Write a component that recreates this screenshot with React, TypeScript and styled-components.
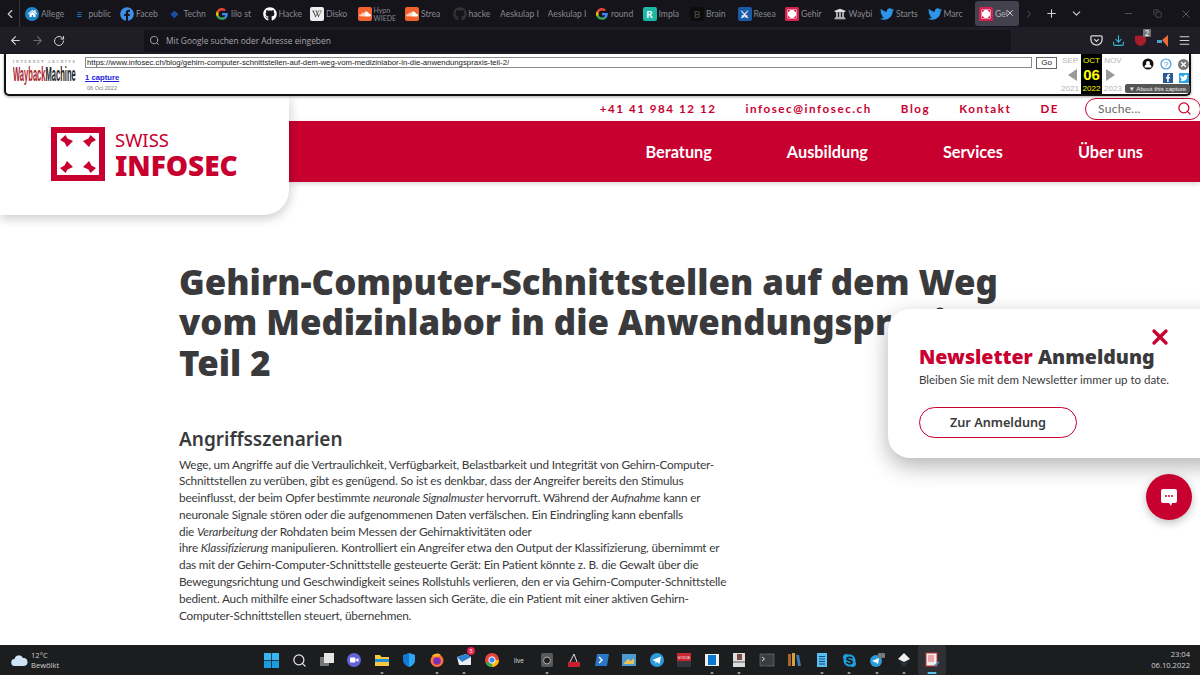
import React from "react";
import styled, { createGlobalStyle } from "styled-components";
import { FaFacebook, FaGithub, FaSoundcloud, FaTwitter, FaSkype, FaFacebookF, FaWikipediaW, FaUniversity, FaHome } from "react-icons/fa";
import { ArrowLeft, ArrowRight, RotateCw, Search, ChevronLeft, ChevronRight, ChevronDown, Plus, Minus, X, Menu, Download, Copy } from "lucide-react";

const RED = "#c8002f";
const INK = "#3a3a3c";
const SANS = `Lato, "Noto Sans", sans-serif`;

const Global = createGlobalStyle`
  html, body { margin: 0; padding: 0; background: #fff; }
  body { width: 1200px; height: 675px; overflow: hidden; font-family: ${SANS}; }
  * { box-sizing: border-box; }
`;

const Screen = styled.div`
  width: 1200px; height: 675px; display: flex; flex-direction: column; overflow: hidden;
`;

/* ---------- browser tabs ---------- */
const TabBar = styled.div`
  height: 27px; flex: none; background: #14141a; display: flex; align-items: center; color: #c9c9cf;
`;
const BackTab = styled.div`
  width: 20px; height: 27px; flex: none; display: flex; align-items: center; justify-content: center; border-right: 1px solid #33333a;
`;
const TabList = styled.div`
  display: flex; margin-left: 5px; width: 995px; flex: none;
`;
const Tab = styled.div<{ $active?: boolean }>`
  width: 47.5px; height: 25px; flex: none; display: flex; align-items: center; gap: 2px; overflow: hidden;
  border-radius: 3px; position: relative;
  background: ${(p) => (p.$active ? "#42414d" : "transparent")};
  font-size: 8.6px; color: ${(p) => (p.$active ? "#bbb" : "#93939a")}; white-space: nowrap;
`;
const TabActive = styled(Tab)`
  margin-left: 0; padding-left: 4px; width: 44px; margin-right: 3.500px;
`;
const TabLabel = styled.span`
  display: block; flex: none; opacity: .92;
`;
const TabDoubleLabel = styled(TabLabel)`
  line-height: 8px; font-size: 7px; white-space: normal; width: 22px;
`;
const TabClose = styled.span`
  position: absolute; right: 4px; top: 7px; display: flex; color: #e6e6e6;
`;
const TabIcon = styled.span<{ $bg?: string; $c?: string }>`
  width: 14px; height: 14px; flex: none; display: flex; align-items: center; justify-content: center; border-radius: 2px;
  background: ${(p) => p.$bg || "transparent"}; color: ${(p) => p.$c || "#fff"}; font-size: 10px; font-weight: 700; line-height: 1;
`;
const TabTools = styled.div`
  flex: 1; display: flex; align-items: center; height: 27px; color: #d5d5d8;
`;
const ToolSlot = styled.span<{ $w: number; $dim?: boolean }>`
  width: ${(p) => p.$w}px; flex: none; display: flex; justify-content: center; opacity: ${(p) => (p.$dim ? 0.35 : 1)};
`;

/* ---------- url toolbar ---------- */
const UrlToolbar = styled.div`
  height: 27px; flex: none; background: #1f1e26; display: flex; align-items: center; color: #d5d5d8;
`;
const NavButtons = styled.div`
  width: 144px; flex: none; display: flex; padding-left: 7px; gap: 6px; align-items: center;
`;
const NavBtn = styled.span<{ $dim?: boolean }>`
  width: 16px; display: flex; justify-content: center; opacity: ${(p) => (p.$dim ? 0.4 : 1)};
`;
const UrlField = styled.div`
  width: 867px; height: 22px; flex: none; background: #15141a; border-radius: 3px; display: flex; align-items: center; gap: 6px;
  padding-left: 5px; font-family: "Open Sans", sans-serif; font-size: 8.4px; color: #a8a8ae;
`;
const ToolIcons = styled.div`
  flex: 1; display: flex; align-items: center; padding-left: 77px; gap: 6px;
`;
const ToolIcon = styled.span<{ $c?: string }>`
  position: relative; width: 16px; height: 16px; display: flex; align-items: center; justify-content: center; color: ${(p) => p.$c || "#d5d5d8"};
`;
const CountBadge = styled.span`
  position: absolute; top: -4px; right: -3px; background: #777; color: #fff; font-size: 7px; line-height: 8px; padding: 0 2px; border-radius: 1px;
`;

/* ---------- wayback ---------- */
const Wayback = styled.div`
  height: 42px; flex: none; margin: 0 9px 0 4px; background: #fff; border: 2px solid #111; border-top: 0;
  border-radius: 0 0 5px 5px; box-shadow: 0 1px 3px rgba(0,0,0,.35); display: flex; font-family: "Liberation Sans", Arial, sans-serif;
  position: relative; z-index: 5;
`;
const WbLogo = styled.div`
  width: 79px; flex: none; padding: 5px 0 0 7px; overflow: hidden;
`;
const WbTiny = styled.div`
  font-size: 3.6px; letter-spacing: 1.85px; color: #555; white-space: nowrap; line-height: 6px; font-family: "Liberation Serif", serif;
`;
const WbMark = styled.div`
  font-size: 21px; font-weight: 700; line-height: 17px; white-space: nowrap; transform: scaleX(.36); transform-origin: left center; width: 180px;
  color: #222;
`;
const WbRed = styled.span`
  color: #a8242e;
`;
const WbMain = styled.div`
  width: 947px; flex: none; display: flex; flex-direction: column; padding-top: 3px;
`;
const WbUrl = styled.div`
  height: 11px; width: 947px; border: 1px solid #8a8a8a; font-size: 7.77px; line-height: 9px; padding-left: 1px; color: #222; white-space: nowrap; overflow: hidden;
`;
const WbCapture = styled.a`
  font-size: 7.7px; font-weight: 700; color: #2222dd; text-decoration: underline; margin-top: 5px; line-height: 10px;
`;
const WbDate = styled.div`
  font-size: 5.5px; color: #777; margin: 2px 0 0 2px; line-height: 6px;
`;
const WbGo = styled.div`
  margin: 3px 0 0 4px; width: 21px; height: 12px; border: 1px solid #666; font-size: 8px; line-height: 10px; text-align: center; color: #222; flex: none;
`;
const WbCal = styled.div`
  display: flex; margin-left: 2px; flex: none; height: 40px;
`;
const WbCol = styled.div<{ $on?: boolean }>`
  width: ${(p) => (p.$on ? 21 : 22)}px; height: 40px; display: flex; flex-direction: column; align-items: center; justify-content: space-between;
  background: ${(p) => (p.$on ? "#000" : "#fff")}; color: ${(p) => (p.$on ? "#ff0" : "#b4b4b4")}; font-size: 8px; padding: 2px 0 1px; line-height: 9px;
`;
const WbDay = styled.div`
  font-size: 15px; font-weight: 700; line-height: 15px;
`;
const WbArrow = styled.div<{ $dir: "l" | "r" }>`
  width: 0; height: 0; border-style: solid; border-width: 6px 0 6px 0; border-color: transparent;
  ${(p) => (p.$dir === "l" ? "border-right: 9px solid #999; margin-left: 5px;" : "border-left: 9px solid #999; margin-right: 5px;")}
`;
const WbRight = styled.div`
  flex: 1; position: relative; padding: 3px 0 0 0; display: flex; flex-direction: column; align-items: flex-end;
`;
const WbIconRow = styled.div`
  display: flex; align-items: center; gap: 6px; height: 14px;
`;
const WbSquare = styled.span<{ $bg: string }>`
  width: 10px; height: 10px; background: ${(p) => p.$bg}; color: #fff; display: flex; align-items: center; justify-content: center;
`;
const WbAbout = styled.div`
  position: absolute; right: -1px; bottom: 1px; height: 9px; width: 65px; background: #555; color: #eee; font-size: 6.2px; line-height: 9px; border-radius: 2px;
  white-space: nowrap; text-align: center;
`;

/* ---------- page ---------- */
const Page = styled.main`
  flex: 1; min-height: 0; position: relative; overflow: hidden; background: #fff; font-family: ${SANS}; color: ${INK};
`;
const SiteHeader = styled.header`
  display: flex; height: 119px;
`;
const LogoCard = styled.div`
  width: 289px; height: 119px; flex: none; background: #fff; border-radius: 0 0 25px 0; box-shadow: 0 3px 12px rgba(0,0,0,.22);
  display: flex; align-items: flex-start; gap: 10px; padding: 31px 0 0 51px; position: relative; z-index: 2;
`;
const LogoText = styled.div`
  color: ${RED}; display: flex; flex-direction: column; font-family: "Noto Sans", sans-serif;
`;
const LogoSwiss = styled.div`
  font-size: 18.5px; line-height: 20px; margin-top: 3px;
`;
const LogoInfosec = styled.div`
  font-size: 28px; font-weight: 900; line-height: 33px; margin-top: -1px;
`;
const HeaderRight = styled.div`
  flex: 1; min-width: 0; display: flex; flex-direction: column;
`;
const TopLinks = styled.div`
  height: 25px; flex: none; display: flex; align-items: center; justify-content: flex-end; gap: 29px; color: ${RED};
  font-size: 11.6px; font-weight: 700; letter-spacing: 1.55px; white-space: nowrap;
`;
const SearchPill = styled.div`
  width: 116px; height: 22px; margin-left: -3px; margin-right: -1px; border: 1.5px solid ${RED}; border-radius: 11px; display: flex; align-items: center; justify-content: space-between;
  padding: 0 8px 0 12px; color: #666; font-size: 12px; font-weight: 400; letter-spacing: .3px;
`;
const RedBar = styled.nav`
  height: 61px; flex: none; background: ${RED}; display: flex; align-items: center; justify-content: flex-end; gap: 75px; padding-right: 57px;
  color: #fff; font-size: 16.3px; font-weight: 700; box-shadow: 0 2px 5px rgba(0,0,0,.15);
`;
const Article = styled.article`
  padding: 46.5px 0 0 179px;
`;
const Title = styled.h1`
  margin: 0; font-family: "Noto Sans", sans-serif; font-size: 34.8px; line-height: 40.5px; font-weight: 900; color: ${INK}; white-space: nowrap;
`;
const SubTitle = styled.h2`
  margin: 42.5px 0 5px; font-family: "Noto Sans", sans-serif; font-size: 19px; line-height: 26px; font-weight: 600; color: ${INK};
`;
const Body = styled.p`
  margin: 0; font-size: 11.8px; letter-spacing: -.19px; line-height: 16.8px; color: ${INK}; white-space: nowrap;
`;
const Popup = styled.aside`
  position: absolute; left: 888px; top: 213px; width: 340px; height: 149px; background: #fff; border-radius: 22px; box-shadow: 0 8px 22px rgba(0,0,0,.3);
  padding: 34px 0 0 31px; z-index: 3;
`;
const PopupClose = styled.span`
  position: absolute; left: 260px; top: 16px; color: ${RED}; display: flex;
`;
const PopupTitle = styled.div`
  font-family: "Noto Sans", sans-serif; font-size: 19.6px; line-height: 28px; font-weight: 900; color: ${INK}; white-space: nowrap;
`;
const PopupRed = styled.span`
  color: ${RED};
`;
const PopupText = styled.div`
  font-size: 11.5px; line-height: 16px; margin-top: 1px; white-space: nowrap;
`;
const PopupButton = styled.div`
  width: 158px; height: 31px; margin-top: 19px; border: 1.5px solid ${RED}; border-radius: 16px; text-align: center; font-family: "Noto Sans", sans-serif; font-size: 12.7px; line-height: 28px; font-weight: 600; color: ${INK};
`;
const ChatButton = styled.div`
  position: absolute; left: 1146px; top: 378px; width: 46px; height: 46px; border-radius: 50%; background: ${RED}; display: flex; align-items: center; justify-content: center;
  box-shadow: 0 3px 8px rgba(0,0,0,.25); z-index: 3;
`;

/* ---------- taskbar ---------- */
const Taskbar = styled.footer`
  height: 30px; flex: none; background: #1c1d1f; color: #ddd; display: flex; align-items: center; position: relative;
`;
const Weather = styled.div`
  width: 258px; flex: none; padding-left: 11px; display: flex; align-items: center; gap: 3px; font-family: "Open Sans", sans-serif; font-size: 7.6px; line-height: 10.5px; color: #cfcfcf;
`;
const TaskIcons = styled.div`
  display: flex; flex: none;
`;
const TaskItem = styled.span<{ $open?: boolean; $active?: boolean }>`
  width: 27.5px; height: 30px; flex: none; display: flex; align-items: center; justify-content: center; position: relative; border-radius: 3px;
  background: ${(p) => (p.$active ? "#2e3033" : "transparent")};
  &::after {
    content: ""; display: ${(p) => (p.$open || p.$active ? "block" : "none")}; position: absolute; bottom: 1px; left: 50%; transform: translateX(-50%);
    width: ${(p) => (p.$active ? 9 : 3)}px; height: 2px; border-radius: 1px; background: ${(p) => (p.$active ? "#5cc3ef" : "#9a9a9a")};
  }
`;
const TaskBadge = styled.span`
  position: absolute; top: 2px; right: 3px; width: 8px; height: 8px; border-radius: 50%; background: #e81e4c; color: #fff; font-size: 6px; line-height: 8px; text-align: center;
`;
const Clock = styled.div`
  margin-left: auto; padding-right: 10px; text-align: right; font-family: "Open Sans", sans-serif; font-size: 7.6px; line-height: 11px; color: #cfcfcf;
`;

/* ---------- icons ---------- */
const GoogleG = () => (
  <svg width="14" height="14" viewBox="0 0 24 24" style={{ flex: "none" }}>
    <path d="M22 12.2c0-.7-.1-1.4-.2-2H12v3.9h5.6a4.8 4.8 0 0 1-2.1 3.1v2.6h3.3c2-1.8 3.2-4.5 3.2-7.6z" fill="#4285f4" />
    <path d="M12 22c2.8 0 5.1-.9 6.8-2.5l-3.3-2.6c-.9.6-2.1 1-3.5 1-2.7 0-5-1.8-5.8-4.3H2.8v2.7A10 10 0 0 0 12 22z" fill="#34a853" />
    <path d="M6.2 13.6a6 6 0 0 1 0-3.8V7.1H2.8a10 10 0 0 0 0 9.2z" fill="#fbbc05" />
    <path d="M12 5.9c1.5 0 2.9.5 3.9 1.5l2.9-2.9A10 10 0 0 0 2.8 7.1l3.4 2.7C7 7.600 9.300 5.900 12 5.900z" fill="#ea4335" />
  </svg>
);
const Infosec = () => (
  <svg width="14" height="14" viewBox="0 0 14 14" style={{ flex: "none" }}>
    <rect width="14" height="14" rx="1.5" fill="#d6204f" />
    <rect x="2.5" y="2.5" width="9" height="9" fill="#fff" />
    <path d="M3 3h2.500L3 5.500zM11 3H8.500L11 5.500zM3 11h2.500L3 8.500zM11 11H8.500L11 8.500z" fill="#d6204f" />
  </svg>
);
const ARROW = "M9 13 L14.5 8 L16.5 11.5 L22 14 L16 20 L13.5 15.5 z";
const LogoMark = () => (
  <svg width="54" height="54" viewBox="0 0 54 54" style={{ flex: "none" }}>
    <rect x="3" y="3" width="48" height="48" fill="none" stroke={RED} strokeWidth="6" />
    <g fill={RED}>
      <path d={ARROW} />
      <path d={ARROW} transform="matrix(-1 0 0 1 54 0)" />
      <path d={ARROW} transform="matrix(1 0 0 -1 0 54)" />
      <path d={ARROW} transform="matrix(-1 0 0 -1 54 54)" />
    </g>
  </svg>
);
const Win = () => (
  <svg width="15" height="15" viewBox="0 0 16 16" fill="#37b6f1">
    <rect x="0" y="0" width="7.6" height="7.6" /><rect x="8.4" y="0" width="7.6" height="7.6" />
    <rect x="0" y="8.4" width="7.6" height="7.6" fill="#1d9be0" /><rect x="8.4" y="8.4" width="7.6" height="7.6" fill="#1d9be0" />
  </svg>
);
const Svg15 = ({ children }: { children: React.ReactNode }) => <svg width="16" height="16" viewBox="0 0 16 16">{children}</svg>;

const taskIcons: { el: React.ReactNode; open?: boolean; active?: boolean; badge?: string }[] = [
  { el: <Win /> },
  { el: <Search size={15} color="#e8e8e8" strokeWidth={2} /> },
  { el: <Svg15><rect x="1" y="5" width="9" height="9" fill="#777" /><rect x="5" y="1" width="10" height="10" fill="#e5e5e5" /></Svg15> },
  { el: <Svg15><circle cx="8" cy="8" r="7" fill="#6264d8" /><rect x="4" y="5.5" width="5.5" height="5" rx="1" fill="#fff" /><path d="M10 7.5l2.5-1.5v4L10 8.5z" fill="#fff" /></Svg15> },
  { el: <Svg15><path d="M1 3h5l1.5 2H15v9H1z" fill="#f7c83f" /><rect x="1" y="7" width="14" height="3" fill="#1f8fd6" /></Svg15>, open: true },
  { el: <Svg15><path d="M8 1l6 2v5c0 3.5-3 6-6 7-3-1-6-3.5-6-7V3z" fill="#1479d4" /><path d="M8 1l6 2v5c0 3.5-3 6-6 7z" fill="#2ea5ee" /></Svg15> },
  { el: <Svg15><circle cx="8" cy="8.5" r="6.5" fill="#ff7139" /><circle cx="8" cy="9" r="3.8" fill="#7d2fb8" /><path d="M3 4c2-3 7-3.5 9-1-2 0-3 1-3 2-3-1-5 0-6-1z" fill="#ffb52e" /></Svg15>, open: true },
  { el: <Svg15><path d="M1 5l9-3 5 3v8H3z" fill="#e8eef3" /><path d="M1 5l5 5 9-5-5-3z" fill="#2f7fd0" /></Svg15>, open: true, badge: "5" },
  { el: <Svg15><circle cx="8" cy="8" r="7" fill="#e8453c" /><path d="M8 8L1.8 11.5A7 7 0 0 0 8 15z" fill="#34a853" /><path d="M8 8h7a7 7 0 0 1-7 7z" fill="#fbbc05" /><circle cx="8" cy="8" r="3.2" fill="#4285f4" stroke="#fff" /></Svg15> },
  { el: <Svg15><text x="8" y="10.5" textAnchor="middle" fontSize="6.5" fill="#d8d8d8" fontFamily="Liberation Sans">live</text></Svg15> },
  { el: <Svg15><rect x="2" y="1" width="12" height="14" rx="2" fill="#58595c" /><circle cx="8" cy="8.5" r="3.5" fill="#222" stroke="#aaa" /></Svg15>, open: true },
  { el: <Svg15><path d="M2 10h12v5H2z" fill="#c61f30" /><path d="M4 10L8 2l3 8" fill="none" stroke="#ddd" /></Svg15> },
  { el: <Svg15><path d="M3 2h12l-2 12H1z" fill="#2978c7" /><path d="M5 5l3 3-3 3" stroke="#fff" fill="none" strokeWidth="1.4" /></Svg15> },
  { el: <Svg15><rect x="1" y="2" width="14" height="12" fill="#4b9ad4" /><path d="M3 11l4-4 3 2 3-3v6H3z" fill="#e7c35a" /></Svg15> },
  { el: <Svg15><circle cx="8" cy="8" r="7" fill="#2c9bd9" /><path d="M3.5 8L12 4.5 10.5 12 8 10l-1.5 1.5V9.500z" fill="#fff" /></Svg15> },
  { el: <Svg15><rect x="1" y="1" width="14" height="8" fill="#c6282d" /><rect x="1" y="9" width="14" height="6" fill="#33373d" /><text x="8" y="7" textAnchor="middle" fontSize="4" fill="#fff" fontFamily="Liberation Sans">VOICE</text></Svg15> },
  { el: <Svg15><rect x="1" y="2" width="14" height="12" fill="#eee" /><rect x="4" y="3" width="8" height="10" fill="#0a76d4" /></Svg15>, open: true },
  { el: <Svg15><rect x="2" y="1" width="12" height="14" fill="#ddd" /><rect x="6" y="2" width="5" height="6" fill="#7a4748" /><rect x="2" y="9" width="12" height="2" fill="#999" /></Svg15>, open: true },
  { el: <Svg15><rect x="1" y="2" width="14" height="12" fill="#3a3d40" stroke="#777" strokeWidth=".6" /><path d="M3 5l2.5 2L3 9" stroke="#ddd" fill="none" /></Svg15> },
  { el: <Svg15><rect x="2" y="2" width="3" height="12" fill="#a8642b" /><rect x="6" y="1" width="3" height="13" fill="#d7a13a" /><path d="M10 3l3 0 2 11h-3z" fill="#3d78b9" /></Svg15> },
  { el: <Svg15><rect x="3" y="1" width="10" height="14" fill="#58bff0" /><path d="M5 4.5h6M5 7h6M5 9.500h6M5 12h6" stroke="#0f4d7a" /></Svg15>, open: true },
  { el: <FaSkype size={15} color="#1d9fe0" />, open: true },
  { el: <Svg15><circle cx="7" cy="9" r="6" fill="#2c9bd9" /><path d="M3 9l7-3-1 6-2-1.5z" fill="#fff" /><rect x="9" y="1" width="7" height="5" rx="1" fill="#777" /></Svg15>, open: true },
  { el: <Svg15><path d="M8 1l6 6-6 3-6-3z" fill="#eee" /><path d="M2 8l6 3 6-3-6 7z" fill="#28353f" /></Svg15>, open: true },
  { el: <Svg15><rect x="2" y="1" width="11" height="13" fill="#eee" stroke="#c33" /><rect x="4" y="3" width="6" height="7" fill="#e9a7a7" /><path d="M10 14l5-4" stroke="#2c9bd9" strokeWidth="1.5" /></Svg15>, active: true },
];

const tabs: { icon?: React.ReactNode; label: string; two?: boolean }[] = [
  { icon: <TabIcon $bg="#1d84c6" style={{ borderRadius: "50%" }}><FaHome size={9} /></TabIcon>, label: "Allege" },
  { icon: <TabIcon $c="#2469c4">≡</TabIcon>, label: "public" },
  { icon: <TabIcon $c="#3f8fe8"><FaFacebook size={14} /></TabIcon>, label: "Faceb" },
  { icon: <TabIcon $c="#1d4fa5">❖</TabIcon>, label: "Techn" },
  { icon: <GoogleG />, label: "lilo st" },
  { icon: <TabIcon><FaGithub size={14} /></TabIcon>, label: "Hacke" },
  { icon: <TabIcon $bg="#eee" $c="#222"><FaWikipediaW size={10} /></TabIcon>, label: "Disko" },
  { icon: <TabIcon $bg="#f2632b"><FaSoundcloud size={12} /></TabIcon>, label: "Hypn WIEDE", two: true },
  { icon: <TabIcon $bg="#f2632b"><FaSoundcloud size={12} /></TabIcon>, label: "Strea" },
  { icon: <TabIcon $c="#333"><FaGithub size={14} /></TabIcon>, label: "hacke" },
  { label: "Aeskulap I" },
  { label: "Aeskulap I" },
  { icon: <GoogleG />, label: "round" },
  { icon: <TabIcon $bg="#1eb7a6">R</TabIcon>, label: "Impla" },
  { icon: <TabIcon $bg="#0c0c0c" $c="#444">B</TabIcon>, label: "Brain" },
  { icon: <TabIcon $bg="#1a5ba6">⚔</TabIcon>, label: "Resea" },
  { icon: <Infosec />, label: "Gehir" },
  { icon: <TabIcon $c="#ddd"><FaUniversity size={12} /></TabIcon>, label: "Waybi" },
  { icon: <TabIcon $c="#2d96e8"><FaTwitter size={14} /></TabIcon>, label: "Starts" },
  { icon: <TabIcon $c="#2d96e8"><FaTwitter size={14} /></TabIcon>, label: "Marc" },
];

const bodyLines: React.ReactNode[] = [
  "Wege, um Angriffe auf die Vertraulichkeit, Verfügbarkeit, Belastbarkeit und Integrität von Gehirn-Computer-",
  "Schnittstellen zu verüben, gibt es genügend. So ist es denkbar, dass der Angreifer bereits den Stimulus",
  <>beeinflusst, der beim Opfer bestimmte <em>neuronale Signalmuster</em> hervorruft. Während der <em>Aufnahme</em> kann er</>,
  "neuronale Signale stören oder die aufgenommenen Daten verfälschen. Ein Eindringling kann ebenfalls",
  <>die <em>Verarbeitung</em> der Rohdaten beim Messen der Gehirnaktivitäten oder</>,
  <>ihre <em>Klassifizierung</em> manipulieren. Kontrolliert ein Angreifer etwa den Output der Klassifizierung, übernimmt er</>,
  "das mit der Gehirn-Computer-Schnittstelle gesteuerte Gerät: Ein Patient könnte z. B. die Gewalt über die",
  "Bewegungsrichtung und Geschwindigkeit seines Rollstuhls verlieren, den er via Gehirn-Computer-Schnittstelle",
  "bedient. Auch mithilfe einer Schadsoftware lassen sich Geräte, die ein Patient mit einer aktiven Gehirn-",
  "Computer-Schnittstellen steuert, übernehmen.",
];

export default function App() {
  return (
    <Screen>
      <Global />
      <TabBar>
        <BackTab><ChevronLeft size={14} /></BackTab>
        <TabList>
          {tabs.map((t, i) => (
            <Tab key={i}>
              {t.icon}
              {t.two ? <TabDoubleLabel>{t.label}</TabDoubleLabel> : <TabLabel>{t.label}</TabLabel>}
            </Tab>
          ))}
          <TabActive $active>
            <Infosec />
            <TabLabel>Gel</TabLabel>
            <TabClose><X size={10} /></TabClose>
          </TabActive>
        </TabList>
        <TabTools>
          <ToolSlot $w={18} $dim><ChevronRight size={12} /></ToolSlot>
          <ToolSlot $w={26}><Plus size={13} /></ToolSlot>
          <ToolSlot $w={24}><ChevronDown size={13} /></ToolSlot>
          <ToolSlot $w={20} />
          <ToolSlot $w={40} $dim><Minus size={11} /></ToolSlot>
          <ToolSlot $w={18} $dim><Copy size={9} /></ToolSlot>
          <ToolSlot $w={40} $dim><X size={12} /></ToolSlot>
        </TabTools>
      </TabBar>
      <UrlToolbar>
        <NavButtons>
          <NavBtn><ArrowLeft size={13} /></NavBtn>
          <NavBtn $dim><ArrowRight size={13} /></NavBtn>
          <NavBtn><RotateCw size={12} /></NavBtn>
        </NavButtons>
        <UrlField>
          <Search size={11} />
          Mit Google suchen oder Adresse eingeben
        </UrlField>
        <ToolIcons>
          <ToolIcon>
            <svg width="13" height="13" viewBox="0 0 14 14" fill="none" stroke="#d5d5d8" strokeWidth="1.4"><path d="M2 2h10a1 1 0 0 1 1 1v3a6 6 0 0 1-12 0V3a1 1 0 0 1 1-1z" /><path d="M4.5 5.5L7 8l2.5-2.5" /></svg>
          </ToolIcon>
          <ToolIcon $c="#38b6d4"><Download size={13} /></ToolIcon>
          <ToolIcon $c="#a71d2a">
            <svg width="13" height="13" viewBox="0 0 14 14" fill="#a71d2a"><path d="M1 2h12v5c0 3-3 5-6 6-3-1-6-3-6-6z" /></svg>
            <CountBadge>2</CountBadge>
          </ToolIcon>
          <ToolIcon>
            <svg width="13" height="14" viewBox="0 0 13 14"><path d="M1 6h5v3H1z" fill="#4aa0c8" /><path d="M6 6l6-5v12z" fill="#ef6a3a" /></svg>
          </ToolIcon>
          <ToolIcon><Menu size={13} /></ToolIcon>
        </ToolIcons>
      </UrlToolbar>
      <Wayback>
        <WbLogo>
          <WbTiny>INTERNET ARCHIVE</WbTiny>
          <WbMark><WbRed>Wayback</WbRed>Machine</WbMark>
        </WbLogo>
        <WbMain>
          <WbUrl>https://www.infosec.ch/blog/gehirn-computer-schnittstellen-auf-dem-weg-vom-medizinlabor-in-die-anwendungspraxis-teil-2/</WbUrl>
          <WbCapture>1 capture</WbCapture>
          <WbDate>06 Oct 2022</WbDate>
        </WbMain>
        <WbGo>Go</WbGo>
        <WbCal>
          <WbCol>SEP<WbArrow $dir="l" />2021</WbCol>
          <WbCol $on>OCT<WbDay>06</WbDay>2022</WbCol>
          <WbCol>NOV<WbArrow $dir="r" />2023</WbCol>
        </WbCal>
        <WbRight>
          <WbIconRow>
            <svg width="12" height="12" viewBox="0 0 12 12"><circle cx="6" cy="6" r="5.5" fill="#111" /><circle cx="6" cy="5" r="2" fill="#fff" /><path d="M2.5 9.5a3.5 3.5 0 0 1 7 0z" fill="#fff" /></svg>
            <svg width="12" height="12" viewBox="0 0 12 12"><circle cx="6" cy="6" r="5" fill="none" stroke="#3d9bd8" strokeWidth="1.2" /><text x="6" y="8.800" textAnchor="middle" fontSize="8" fill="#3d9bd8" fontFamily="Liberation Sans">?</text></svg>
            <svg width="11" height="11" viewBox="0 0 12 12"><circle cx="6" cy="6" r="6" fill="#777" /><path d="M3.5 3.5l5 5m0-5l-5 5" stroke="#fff" strokeWidth="1.5" /></svg>
          </WbIconRow>
          <WbIconRow>
            <WbSquare $bg="#2a5a94"><FaFacebookF size={8} /></WbSquare>
            <WbSquare $bg="#2ba6e6"><FaTwitter size={8} /></WbSquare>
          </WbIconRow>
          <WbAbout>▼ About this capture</WbAbout>
        </WbRight>
      </Wayback>
      <Page>
        <SiteHeader>
          <LogoCard>
            <LogoMark />
            <LogoText>
              <LogoSwiss>SWISS</LogoSwiss>
              <LogoInfosec>INFOSEC</LogoInfosec>
            </LogoText>
          </LogoCard>
          <HeaderRight>
            <TopLinks>
              <span>+41 41 984 12 12</span>
              <span>infosec@infosec.ch</span>
              <span>Blog</span>
              <span>Kontakt</span>
              <span>DE</span>
              <SearchPill>Suche... <Search size={15} color={RED} strokeWidth={2} /></SearchPill>
            </TopLinks>
            <RedBar>
              <span>Beratung</span>
              <span>Ausbildung</span>
              <span>Services</span>
              <span>Über uns</span>
            </RedBar>
          </HeaderRight>
        </SiteHeader>
        <Article>
          <Title>
            Gehirn-Computer-Schnittstellen auf dem Weg<br />
            vom Medizinlabor in die Anwendungspraxis –<br />
            Teil 2
          </Title>
          <SubTitle>Angriffsszenarien</SubTitle>
          {bodyLines.map((l, i) => <Body key={i}>{l}</Body>)}
        </Article>
        <Popup>
          <PopupClose><X size={24} strokeWidth={3.4} /></PopupClose>
          <PopupTitle><PopupRed>Newsletter</PopupRed> Anmeldung</PopupTitle>
          <PopupText>Bleiben Sie mit dem Newsletter immer up to date.</PopupText>
          <PopupButton>Zur Anmeldung</PopupButton>
        </Popup>
        <ChatButton>
          <svg width="18" height="19" viewBox="0 0 18 19"><path d="M3 1h12a2 2 0 0 1 2 2v10a2 2 0 0 1-2 2h-3l-1 3-2-3H3a2 2 0 0 1-2-2V3a2 2 0 0 1 2-2z" fill="#fff" /><circle cx="6" cy="8" r="1" fill={RED} /><circle cx="9" cy="8" r="1" fill={RED} /><circle cx="12" cy="8" r="1" fill={RED} /></svg>
        </ChatButton>
      </Page>
      <Taskbar>
        <Weather>
          <svg width="17" height="13" viewBox="0 0 17 13"><path d="M4 12a3.5 3.5 0 0 1-.5-7A4.5 4.5 0 0 1 12 4a3.8 3.8 0 0 1 1 8z" fill="#cfe3f7" /></svg>
          <div>12°C<br />Bewölkt</div>
        </Weather>
        <TaskIcons>
          {taskIcons.map((t, i) => (
            <TaskItem key={i} $open={t.open} $active={t.active}>
              {t.el}
              {t.badge && <TaskBadge>{t.badge}</TaskBadge>}
            </TaskItem>
          ))}
        </TaskIcons>
        <Clock>23:04<br />06.10.2022</Clock>
      </Taskbar>
    </Screen>
  );
}
